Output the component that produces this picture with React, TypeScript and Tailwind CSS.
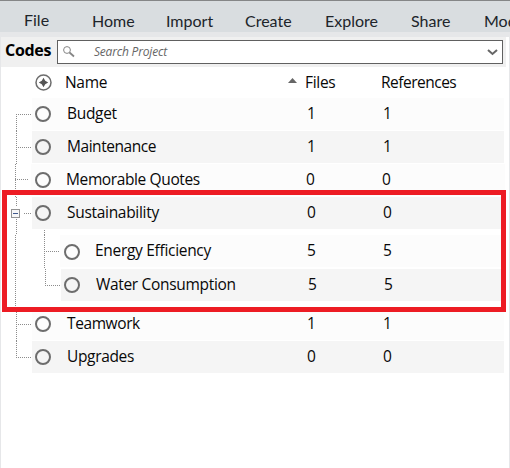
import React from 'react';

type Row = {
  name: string;
  count: number;
  height: string;
  gutter: string;
  right: string;
  circle: string;
  nameGap: string;
  nameWidth: string;
  tracking: string;
  lines: string;
  toggle?: boolean;
  shade?: boolean;
};

const top = { gutter: 'w-8', right: 'mr-[5px]', circle: 'ml-[3px] mt-2', nameGap: 'ml-4', nameWidth: 'w-[240px]', tracking: 'tracking-[-0.3px]' };

const rows: Row[] = [
  { ...top, name: 'Budget', count: 1, height: 'h-[33px]', lines: 'M16.5 16V33M16 16.5H31' },
  { ...top, name: 'Maintenance', count: 1, height: 'h-[33px]', tracking: 'tracking-[-0.45px]', lines: 'M16.5 0V33M16 16.5H31', shade: true },
  { ...top, name: 'Memorable Quotes', count: 0, height: 'h-[33px]', gutter: 'w-[31px]', right: 'mr-1', circle: 'ml-1 mt-2', nameGap: 'ml-[15px]', tracking: 'tracking-[-0.38px]', lines: 'M15.5 0V33M15 15.5H29' },
  { ...top, name: 'Sustainability', count: 0, height: 'h-[38px]', lines: 'M16.5 0V10M16.5 22V38M24 16.5H31M44.5 33V38', toggle: true, shade: true },
  { ...top, name: 'Energy Efficiency', count: 5, height: 'h-[34px]', gutter: 'w-[60px]', circle: 'ml-1 mt-[9px]', nameGap: 'ml-[15px]', nameWidth: 'w-[212px]', lines: 'M15.5 0V34M44.5 0V34M44 16.5H59' },
  { ...top, name: 'Water Consumption', count: 5, height: 'h-[39px]', gutter: 'w-[61px]', nameWidth: 'w-[212px]', tracking: 'tracking-[-0.32px]', lines: 'M15.5 0V39M45.5 0V16M45 16.5H60', shade: true },
  { ...top, name: 'Teamwork', count: 1, height: 'h-[33px]', tracking: 'tracking-[-0.4px]', lines: 'M16.5 0V33M16 16.5H31' },
  { ...top, name: 'Upgrades', count: 0, height: 'h-[33px]', tracking: 'tracking-[-0.35px]', lines: 'M16.5 0V16M16 16.5H31', shade: true },
];

function CodeRow({ row }: { row: Row }) {
  return (
    <div className={`flex ${row.height}`}>
      <svg className={`-ml-px h-full shrink-0 overflow-visible ${row.gutter}`} fill="none" shapeRendering="crispEdges">
        <path d={row.lines} stroke="#8c8c8c" strokeDasharray="1 1" />
        {row.toggle && (
          <>
            <rect x="11.5" y="12.5" width="8" height="8" fill="#f7f7f7" stroke="#929292" />
            <path d="M13 16.5h5" stroke="#40598d" />
          </>
        )}
      </svg>
      <div className={`flex h-8 flex-1 ${row.right} ${row.shade ? 'bg-[#f5f5f5]' : 'bg-[#fcfcfc]'}`}>
        <svg className={`size-4 shrink-0 ${row.circle}`} viewBox="0 0 16 16" fill="none">
          <circle cx="8" cy="8" r="7" stroke="#6d6d6d" strokeWidth="2" />
        </svg>
        <div className={`${row.nameGap} ${row.nameWidth} ${row.tracking} shrink-0 leading-[30px] whitespace-nowrap`}>{row.name}</div>
        <div className="w-[76px] shrink-0 leading-[30px]">{row.count}</div>
        <div className="leading-[30px]">{row.count}</div>
      </div>
    </div>
  );
}

const menu = [
  ['File', 'w-[68px] -mt-px'],
  ['Home', 'w-[74px]'],
  ['Import', 'w-[79px]'],
  ['Create', 'w-20'],
  ['Explore', 'w-[86px]'],
  ['Share', 'w-[73px]'],
  ['Modules', 'w-16'],
];

export default function App() {
  return (
    <div className="relative h-[468px] w-[510px] overflow-hidden bg-[#e6e7e9] font-['Open_Sans',sans-serif] text-[15.5px] text-[#080808]">
      <nav className="flex h-8 overflow-hidden border-t border-[#858687] bg-[#d9dde0] pl-6 font-['Lato',sans-serif] text-base leading-[40px] text-[#20242a]">
        {menu.map(([label, style]) => (
          <span key={label} className={`shrink-0 ${style}`}>{label}</span>
        ))}
      </nav>
      <main className="mx-px mt-[5px] h-[431px] bg-white">
        <div className="mr-[3px] flex h-[30px] bg-[#f0f0f0]">
          <h1 className="w-14 pl-1 text-base leading-[27px] font-bold tracking-[-0.3px] text-black">Codes</h1>
          <div className="mt-[3px] flex h-6 w-[446px] items-center border border-[#606060] bg-white">
            <svg className="ml-[5px] size-3" viewBox="0 0 12 12" fill="none" stroke="#858585">
              <circle cx="4" cy="4" r="3.4" />
              <path d="m6.5 6.5 4.5 4" strokeWidth="1.7" />
            </svg>
            <span className="ml-[19px] flex-1 text-[12px] leading-5 tracking-[-0.2px] text-[#666] italic">Search Project</span>
            <svg className="mr-1 h-[7px] w-[11px]" viewBox="0 0 11 7" fill="none">
              <path d="m1 1 4.5 4L10 1" stroke="#666" strokeWidth="2" />
            </svg>
          </div>
        </div>
        <div className="flex h-[31px] leading-[31px]">
          <svg className="mt-[7px] ml-[34px] size-[17px]" viewBox="0 0 17 17" fill="none">
            <circle cx="8.5" cy="8.5" r="7.5" stroke="#6d6d6d" strokeWidth="1.5" />
            <path d="m8.5 3.8 1.7 3 3 1.7-3 1.7-1.7 3-1.7-3-3-1.7 3-1.7Z" fill="#555" />
          </svg>
          <span className="ml-[13px] w-[223px] tracking-[-0.3px]">Name</span>
          <svg className="mt-[11px] h-[5px] w-[9px]" viewBox="0 0 9 5"><path d="M0 5 4.5 0 9 5Z" fill="#666" /></svg>
          <span className="ml-2 w-[76px] tracking-[-0.3px]">Files</span>
          <span className="tracking-[-0.5px]">References</span>
        </div>
        {rows.map((row) => <CodeRow key={row.name} row={row} />)}
      </main>
      <div className="pointer-events-none absolute top-[190px] left-[2px] h-[122px] w-[504px] border-[5px] border-[#ed1c24]" />
    </div>
  );
}
